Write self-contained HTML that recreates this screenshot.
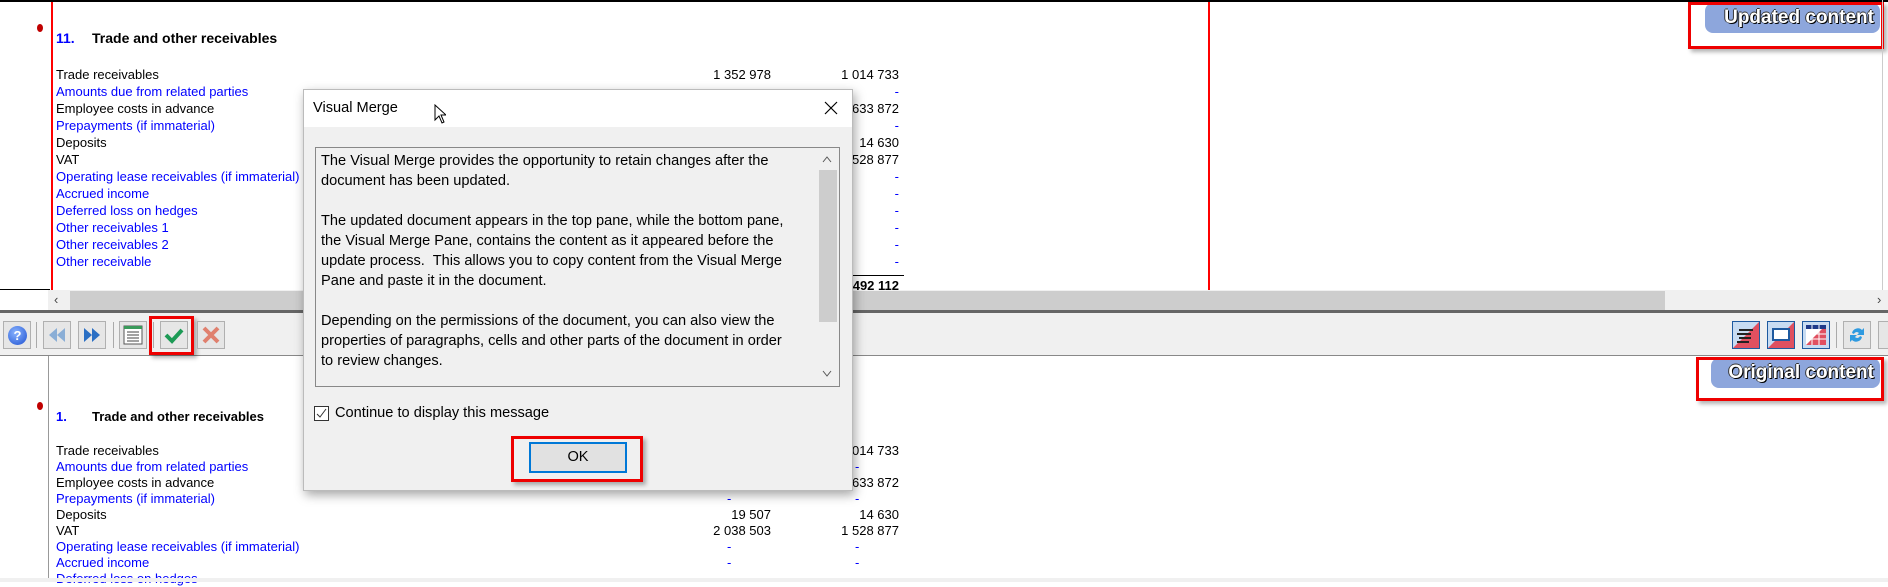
<!DOCTYPE html>
<html><head><meta charset="utf-8"><style>
*{margin:0;padding:0;box-sizing:border-box}
body{width:1888px;height:582px;position:relative;overflow:hidden;background:#fff;font-family:"Liberation Sans",Arial,sans-serif;font-size:13px;color:#000}
.a{position:absolute}
.t{position:absolute;white-space:nowrap;line-height:17px}
.b{color:#0000ff}
.n{position:absolute;white-space:nowrap;text-align:right;line-height:17px}
.ico{position:absolute;width:28px;height:28px;border:1px solid #b0b0b0;background:#e6e6e6}
.lbl{position:absolute;background:#8da6dc;border-radius:8px;color:#fff;font-weight:bold;font-size:19px;white-space:nowrap;text-shadow:1px 1px 0 #000,-1px 0 0 #333,0 -1px 0 #333;padding:0 6px;line-height:30px;text-align:right}
.red{position:absolute;border:3px solid #e00;box-shadow:3px 3px 4px rgba(0,0,0,.3)}
.dt{position:absolute;left:321px;font-size:14.6px;line-height:20px;color:#000;white-space:nowrap}
</style></head><body>
<!-- top pane -->
<div class="a" style="left:0;top:0;width:1888px;height:2px;background:#000"></div>
<div class="a" style="left:51px;top:2px;width:2px;height:288px;background:#f00"></div>
<div class="a" style="left:1208px;top:2px;width:2px;height:288px;background:#f00"></div>
<div class="a" style="left:0;top:289px;width:50px;height:1px;background:#000"></div>
<div class="a" style="left:37px;top:24px;width:6px;height:8px;border-radius:50%;background:#c00000"></div>
<div class="t b" style="left:56px;top:30px;font-weight:bold;font-size:14px">11.</div>
<div class="t" style="left:92px;top:30px;font-weight:bold;font-size:14px">Trade and other receivables</div>
<div class="t" style="left:56px;top:66px">Trade receivables</div>
<div class="t b" style="left:56px;top:83px">Amounts due from related parties</div>
<div class="t" style="left:56px;top:100px">Employee costs in advance</div>
<div class="t b" style="left:56px;top:117px">Prepayments (if immaterial)</div>
<div class="t" style="left:56px;top:134px">Deposits</div>
<div class="t" style="left:56px;top:151px">VAT</div>
<div class="t b" style="left:56px;top:168px">Operating lease receivables (if immaterial)</div>
<div class="t b" style="left:56px;top:185px">Accrued income</div>
<div class="t b" style="left:56px;top:202px">Deferred loss on hedges</div>
<div class="t b" style="left:56px;top:219px">Other receivables 1</div>
<div class="t b" style="left:56px;top:236px">Other receivables 2</div>
<div class="t b" style="left:56px;top:253px">Other receivable</div>
<div class="n" style="right:1117px;top:66px">1 352 978</div>
<div class="n" style="right:989px;top:66px">1 014 733</div>
<div class="n b" style="right:989px;top:83px">-</div>
<div class="n" style="right:989px;top:100px">633 872</div>
<div class="n b" style="right:989px;top:117px">-</div>
<div class="n" style="right:989px;top:134px">14 630</div>
<div class="n" style="right:989px;top:151px">1 528 877</div>
<div class="n b" style="right:989px;top:168px">-</div>
<div class="n b" style="right:989px;top:185px">-</div>
<div class="n b" style="right:989px;top:202px">-</div>
<div class="n b" style="right:989px;top:219px">-</div>
<div class="n b" style="right:989px;top:236px">-</div>
<div class="n b" style="right:989px;top:253px">-</div>
<div class="a" style="left:840px;top:275px;width:64px;height:1px;background:#000"></div>
<div class="n" style="right:989px;top:277px;font-weight:bold">1 492 112</div>
<div class="lbl" style="left:1705px;top:3px;width:175px">Updated content</div>
<div class="red" style="left:1688px;top:2px;width:196px;height:47px"></div>
<div class="a" style="left:1882px;top:0;width:1px;height:310px;background:#ccc"></div>
<!-- scrollbar -->
<div class="a" style="left:48px;top:290px;width:1840px;height:20px;background:#f0f0f0"></div>
<div class="a" style="left:70px;top:291px;width:1595px;height:19px;background:#cdcdcd"></div>
<div class="t" style="left:54px;top:291px;color:#444">&lsaquo;</div>
<div class="t" style="left:1877px;top:291px;color:#444">&rsaquo;</div>
<!-- toolbar -->
<div class="a" style="left:0;top:310px;width:1888px;height:3px;background:#666"></div>
<div class="a" style="left:0;top:313px;width:1888px;height:43px;background:#f0f0f0"></div>
<div class="a" style="left:0;top:355px;width:1888px;height:1px;background:#888"></div>
<div class="ico" style="left:3px;top:321px"><div class="a" style="left:4px;top:4px;width:19px;height:19px;border-radius:50%;background:radial-gradient(circle at 40% 35%,#8ab4ff,#1c4fd0);color:#fff;font-weight:bold;font-size:13px;text-align:center;line-height:19px">?</div></div>
<div class="a" style="left:36px;top:322px;width:1px;height:26px;background:#aaa"></div>
<div class="ico" style="left:43px;top:321px"><svg width="26" height="26"><path d="M13 6L5 13L13 20Z M21 6L13 13L21 20Z" fill="#8aaed6"/></svg></div>
<div class="ico" style="left:78px;top:321px"><svg width="26" height="26"><path d="M5 6L13 13L5 20Z M13 6L21 13L13 20Z" fill="#2a6fc4"/></svg></div>
<div class="a" style="left:113px;top:322px;width:1px;height:26px;background:#aaa"></div>
<div class="ico" style="left:119px;top:321px"><svg width="26" height="26"><rect x="4" y="4" width="18" height="18" fill="#fff" stroke="#555"/><rect x="4" y="4" width="18" height="3" fill="#3a9a5a"/><path d="M7 10h12M7 13h12M7 16h12M7 19h12" stroke="#444"/></svg></div>
<div class="a" style="left:153px;top:322px;width:1px;height:26px;background:#aaa"></div>
<div class="ico" style="left:160px;top:321px"><svg width="26" height="26"><path d="M5 13L11 19L21 8" stroke="#1c9a55" stroke-width="4" fill="none"/></svg></div>
<div class="red" style="left:149px;top:316px;width:45px;height:39px"></div>
<div class="ico" style="left:197px;top:321px"><svg width="26" height="26"><path d="M6 6L20 20M20 6L6 20" stroke="#e0806e" stroke-width="4"/></svg></div>
<div class="ico" style="left:1732px;top:321px;background:#c8dcf2;border-color:#1e5aa0"><svg width="26" height="26"><path d="M26 0V26H0Z" fill="#e05060"/><path d="M6 8h14M4 12h14M6 16h12M4 20h12" stroke="#222" stroke-width="2"/></svg></div>
<div class="ico" style="left:1767px;top:321px;background:#c8dcf2;border-color:#1e5aa0"><svg width="26" height="26"><path d="M26 0V26H0Z" fill="#e05060"/><rect x="5" y="7" width="16" height="11" fill="#fff" stroke="#1e5aa0" stroke-width="2"/></svg></div>
<div class="ico" style="left:1802px;top:321px;background:#c8dcf2;border-color:#1e5aa0"><svg width="26" height="26"><rect x="3" y="3" width="20" height="20" fill="#fff"/><path d="M23 3V23H3Z" fill="#e05060"/><rect x="3" y="3" width="20" height="4" fill="#1e3a8a"/><path d="M3 12h20M3 17h20M9 3v20M16 3v20" stroke="#fff"/></svg></div>
<div class="a" style="left:1836px;top:322px;width:1px;height:26px;background:#aaa"></div>
<div class="ico" style="left:1843px;top:321px"><svg width="26" height="26"><path d="M8 11a6 6 0 0 1 10-3l2-2v7h-7l2-2a3 3 0 0 0-5 1Z M18 15a6 6 0 0 1-10 3l-2 2v-7h7l-2 2a3 3 0 0 0 5-1Z" fill="#2e9ae0"/></svg></div>
<div class="ico" style="left:1878px;top:321px"></div>
<!-- bottom pane -->
<div class="a" style="left:48px;top:356px;width:1px;height:226px;background:#999"></div>
<div class="a" style="left:37px;top:402px;width:6px;height:8px;border-radius:50%;background:#c00000"></div>
<div class="t b" style="left:56px;top:408px;font-weight:bold">1.</div>
<div class="t" style="left:92px;top:408px;font-weight:bold">Trade and other receivables</div>
<div class="t" style="left:56px;top:443px;line-height:16px">Trade receivables</div>
<div class="t b" style="left:56px;top:459px;line-height:16px">Amounts due from related parties</div>
<div class="t" style="left:56px;top:475px;line-height:16px">Employee costs in advance</div>
<div class="t b" style="left:56px;top:491px;line-height:16px">Prepayments (if immaterial)</div>
<div class="t" style="left:56px;top:507px;line-height:16px">Deposits</div>
<div class="t" style="left:56px;top:523px;line-height:16px">VAT</div>
<div class="t b" style="left:56px;top:539px;line-height:16px">Operating lease receivables (if immaterial)</div>
<div class="t b" style="left:56px;top:555px;line-height:16px">Accrued income</div>
<div class="t b" style="left:56px;top:571px;line-height:16px">Deferred loss on hedges</div>
<div class="n" style="right:989px;top:443px;line-height:16px">1 014 733</div>
<div class="n b" style="left:855px;top:459px;line-height:16px">-</div>
<div class="n" style="right:989px;top:475px;line-height:16px">633 872</div>
<div class="n b" style="left:727px;top:491px;line-height:16px">-</div>
<div class="n b" style="left:855px;top:491px;line-height:16px">-</div>
<div class="n" style="right:1117px;top:507px;line-height:16px">19 507</div>
<div class="n" style="right:989px;top:507px;line-height:16px">14 630</div>
<div class="n" style="right:1117px;top:523px;line-height:16px">2 038 503</div>
<div class="n" style="right:989px;top:523px;line-height:16px">1 528 877</div>
<div class="n b" style="left:727px;top:539px;line-height:16px">-</div>
<div class="n b" style="left:855px;top:539px;line-height:16px">-</div>
<div class="n b" style="left:727px;top:555px;line-height:16px">-</div>
<div class="n b" style="left:855px;top:555px;line-height:16px">-</div>
<div class="a" style="left:0;top:578px;width:1888px;height:4px;background:#f0f0f0"></div>
<div class="lbl" style="left:1711px;top:358px;width:169px">Original content</div>
<div class="red" style="left:1696px;top:357px;width:188px;height:44px"></div>
<!-- dialog -->
<div class="a" style="left:303px;top:89px;width:550px;height:402px;background:#f0f0f0;border:1px solid #bbb;box-shadow:2px 4px 10px rgba(0,0,0,.35)"></div>
<div class="a" style="left:304px;top:90px;width:548px;height:37px;background:#fff"></div>
<div class="t" style="left:313px;top:100px;font-size:14.6px">Visual Merge</div>
<svg class="a" style="left:824px;top:101px" width="14" height="14"><path d="M1 1L13 13M13 1L1 13" stroke="#000" stroke-width="1.2"/></svg>
<svg class="a" style="left:434px;top:104px" width="12" height="20"><path d="M1 1V16L5 12L8 19L10 18L7 11H12Z" fill="#fff" stroke="#000"/></svg>
<div class="a" style="left:315px;top:147px;width:525px;height:240px;border:1px solid #888;background:#f0f0f0"></div>
<div class="a" style="left:818px;top:148px;width:20px;height:238px;background:#f0f0f0"></div>
<div class="a" style="left:819px;top:170px;width:18px;height:152px;background:#cdcdcd"></div>
<svg class="a" style="left:822px;top:156px" width="10" height="8"><path d="M1 6L5 1L9 6" stroke="#555" fill="none"/></svg>
<svg class="a" style="left:822px;top:370px" width="10" height="8"><path d="M1 1L5 6L9 1" stroke="#555" fill="none"/></svg>
<div class="dt" style="top:151px">The Visual Merge provides the opportunity to retain changes after the</div>
<div class="dt" style="top:171px">document has been updated.</div>
<div class="dt" style="top:211px">The updated document appears in the top pane, while the bottom pane,</div>
<div class="dt" style="top:231px">the Visual Merge Pane, contains the content as it appeared before the</div>
<div class="dt" style="top:251px">update process.&nbsp; This allows you to copy content from the Visual Merge</div>
<div class="dt" style="top:271px">Pane and paste it in the document.</div>
<div class="dt" style="top:311px">Depending on the permissions of the document, you can also view the</div>
<div class="dt" style="top:331px">properties of paragraphs, cells and other parts of the document in order</div>
<div class="dt" style="top:351px">to review changes.</div>
<div class="a" style="left:314px;top:406px;width:15px;height:15px;border:1px solid #333;background:#fff"></div>
<svg class="a" style="left:315px;top:407px" width="13" height="13"><path d="M2 7L5 10L11 2" stroke="#333" fill="none"/></svg>
<div class="dt" style="left:335px;top:403px">Continue to display this message</div>
<div class="a" style="left:529px;top:442px;width:98px;height:31px;border:2px solid #0078d7;background:#e1e1e1;text-align:center;line-height:27px;font-size:14.6px">OK</div>
<div class="red" style="left:511px;top:436px;width:132px;height:46px"></div>
</body></html>
